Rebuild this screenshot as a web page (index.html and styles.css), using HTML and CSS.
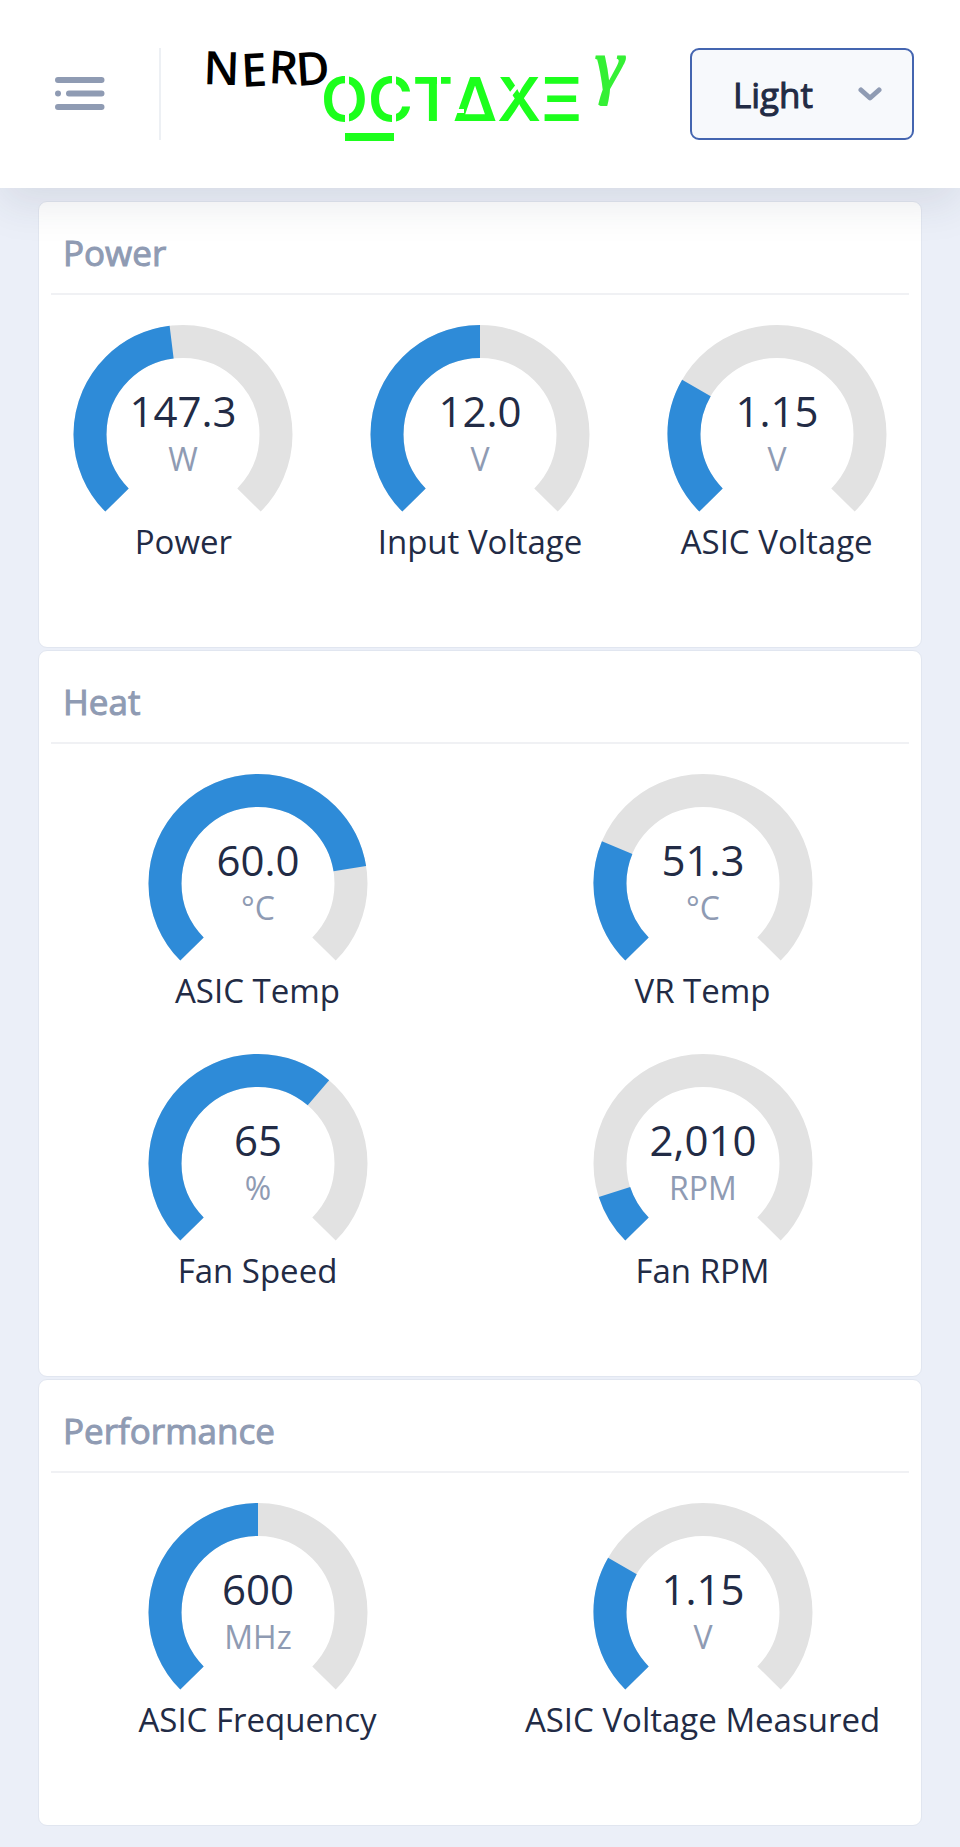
FILE: index.html
```html
<!DOCTYPE html>
<html lang="en">
<head>
  <meta charset="UTF-8" />
  <meta name="viewport" content="width=device-width, initial-scale=1.0"/>
  <title>NerdOctaxe γ</title>
  <link rel="stylesheet" href="styles.css">
</head>
<body>
  <header class="header">
    <button class="menu-button" type="button" aria-label="Toggle menu">
      <svg width="50" height="36" viewBox="0 0 50 36">
        <path d="M3 4H46.500M14 17.500H46.500M3 31H46.500M3 17.500H3.010"/>
      </svg>
    </button>
    <a class="logo" href="#" aria-label="NerdOctaxe γ">
      <svg width="430" height="92" viewBox="0 0 430 92">
        <text class="logo-nerd" x="3 42 68 97" y="36 39 35 38" rotate="2 -3 3 -4">NERD</text>
        <text class="logo-octaxe" x="121" y="73">OCTΔXΞ</text>
        <!-- stencil cuts -->
        <path class="logo-cut" d="M147 24V78M194 24V78M239 24V40M247 63H264M307 51L318 37"/>
        <rect class="logo-bar" x="145" y="85" width="49" height="8"/>
        <text class="logo-gamma" x="395" y="42">γ</text>
      </svg>
    </a>
    <div class="theme">
      <select class="theme-select" aria-label="Theme">
        <option>Light</option>
        <option>Dark</option>
      </select>
      <svg class="theme-arrow" width="24" height="16" viewBox="0 0 24 16">
        <path d="M3 4L12 12L21 4"/>
      </svg>
    </div>
  </header>

  <main class="container">
    <section class="card">
      <h2>Power</h2>
      <div class="gauges three">
        <figure class="gauge">
          <svg width="220" height="211" viewBox="0 0 220 211">
            <path class="track" d="M44 189A93 93 0 1 1 176 189"/>
            <path class="fill" d="M44 189A93 93 0 1 1 176 189" pathLength="100" stroke-dasharray="47.4 200"/>
            <text class="value" x="110" y="116">147.3</text>
            <text class="unit" x="110" y="160">W</text>
          </svg>
          <figcaption>Power</figcaption>
        </figure>
        <figure class="gauge">
          <svg width="220" height="211" viewBox="0 0 220 211">
            <path class="track" d="M44 189A93 93 0 1 1 176 189"/>
            <path class="fill" d="M44 189A93 93 0 1 1 176 189" pathLength="100" stroke-dasharray="50 200"/>
            <text class="value" x="110" y="116">12.0</text>
            <text class="unit" x="110" y="160">V</text>
          </svg>
          <figcaption>Input Voltage</figcaption>
        </figure>
        <figure class="gauge">
          <svg width="220" height="211" viewBox="0 0 220 211">
            <path class="track" d="M44 189A93 93 0 1 1 176 189"/>
            <path class="fill" d="M44 189A93 93 0 1 1 176 189" pathLength="100" stroke-dasharray="27.7 200"/>
            <text class="value" x="110" y="116">1.15</text>
            <text class="unit" x="110" y="160">V</text>
          </svg>
          <figcaption>ASIC Voltage</figcaption>
        </figure>
      </div>
    </section>

    <section class="card">
      <h2>Heat</h2>
      <div class="gauges">
        <figure class="gauge">
          <svg width="220" height="211" viewBox="0 0 220 211">
            <path class="track" d="M44 189A93 93 0 1 1 176 189"/>
            <path class="fill" d="M44 189A93 93 0 1 1 176 189" pathLength="100" stroke-dasharray="80 200"/>
            <text class="value" x="110" y="116">60.0</text>
            <text class="unit" x="110" y="160">°C</text>
          </svg>
          <figcaption>ASIC Temp</figcaption>
        </figure>
        <figure class="gauge">
          <svg width="220" height="211" viewBox="0 0 220 211">
            <path class="track" d="M44 189A93 93 0 1 1 176 189"/>
            <path class="fill" d="M44 189A93 93 0 1 1 176 189" pathLength="100" stroke-dasharray="25 200"/>
            <text class="value" x="110" y="116">51.3</text>
            <text class="unit" x="110" y="160">°C</text>
          </svg>
          <figcaption>VR Temp</figcaption>
        </figure>
        <figure class="gauge">
          <svg width="220" height="211" viewBox="0 0 220 211">
            <path class="track" d="M44 189A93 93 0 1 1 176 189"/>
            <path class="fill" d="M44 189A93 93 0 1 1 176 189" pathLength="100" stroke-dasharray="65 200"/>
            <text class="value" x="110" y="116">65</text>
            <text class="unit" x="110" y="160">%</text>
          </svg>
          <figcaption>Fan Speed</figcaption>
        </figure>
        <figure class="gauge">
          <svg width="220" height="211" viewBox="0 0 220 211">
            <path class="track" d="M44 189A93 93 0 1 1 176 189"/>
            <path class="fill" d="M44 189A93 93 0 1 1 176 189" pathLength="100" stroke-dasharray="10 200"/>
            <text class="value" x="110" y="116">2,010</text>
            <text class="unit" x="110" y="160">RPM</text>
          </svg>
          <figcaption>Fan RPM</figcaption>
        </figure>
      </div>
    </section>

    <section class="card">
      <h2>Performance</h2>
      <div class="gauges">
        <figure class="gauge">
          <svg width="220" height="211" viewBox="0 0 220 211">
            <path class="track" d="M44 189A93 93 0 1 1 176 189"/>
            <path class="fill" d="M44 189A93 93 0 1 1 176 189" pathLength="100" stroke-dasharray="50 200"/>
            <text class="value" x="110" y="116">600</text>
            <text class="unit" x="110" y="160">MHz</text>
          </svg>
          <figcaption>ASIC Frequency</figcaption>
        </figure>
        <figure class="gauge">
          <svg width="220" height="211" viewBox="0 0 220 211">
            <path class="track" d="M44 189A93 93 0 1 1 176 189"/>
            <path class="fill" d="M44 189A93 93 0 1 1 176 189" pathLength="100" stroke-dasharray="27.7 200"/>
            <text class="value" x="110" y="116">1.15</text>
            <text class="unit" x="110" y="160">V</text>
          </svg>
          <figcaption>ASIC Voltage Measured</figcaption>
        </figure>
      </div>
    </section>
  </main>
</body>
</html>
```
FILE: styles.css
```css
* {
  box-sizing: border-box;
}
body {
  font-family: "Open Sans", "Noto Sans", sans-serif;
  margin: 0;
  background: #ebeff8;
  color: #222b45;
}
.header {
  position: relative;
  z-index: 1;
  display: flex;
  align-items: center;
  padding: 48px 46px 48px 55px;
  background: #fff;
  box-shadow: 0 16px 40px rgba(44, 51, 73, 0.1);
}
.menu-button {
  display: flex;
  padding: 0;
  border: none;
  background: none;
  cursor: pointer;
}
.menu-button path,
.theme-arrow path {
  fill: none;
  stroke: #8f9bb3;
  stroke-width: 5;
  stroke-linecap: round;
  stroke-linejoin: round;
}
.menu-button path {
  stroke-width: 6;
}
.logo {
  display: flex;
  margin-left: 54px;
  padding-left: 39px;
  border-left: 2px solid #edf0f4;
}
.logo svg {
  overflow: visible;
}
.logo-nerd {
  font-size: 46px;
  font-weight: 600;
  fill: #000;
}
.logo-octaxe {
  font-family: Inter, sans-serif;
  font-size: 61px;
  font-weight: 600;
  fill: #1cff1c;
}
.logo-gamma {
  font-family: "Liberation Serif", serif;
  font-size: 72px;
  font-style: italic;
  fill: #35f035;
  stroke: #35f035;
  stroke-width: 2;
}
.logo-bar {
  fill: #1cff1c;
}
.logo-cut {
  fill: none;
  stroke: #fff;
  stroke-width: 4;
}
.theme {
  display: grid;
  align-items: center;
  width: 224px;
  margin-left: auto;
}
.theme-select,
.theme-arrow {
  grid-area: 1 / 1;
}
.theme-select {
  appearance: none;
  height: 92px;
  padding: 0 72px 0 41px;
  border: 2px solid #4465b0;
  border-radius: 9px;
  background: #f7f9fc;
  color: #222b45;
  font-family: inherit;
  font-size: 35px;
  -webkit-text-stroke: 1px #222b45;
}
.theme-arrow {
  justify-self: end;
  margin-right: 32px;
  pointer-events: none;
}
.container {
  display: flex;
  flex-direction: column;
  gap: 2px;
  padding: 13px 38px 21px;
}
.card {
  padding: 0 12px 56px;
  border: 1px solid #e1e6f0;
  border-radius: 9px;
  background: #fff;
}
.card h2 {
  margin: 0;
  padding: 27px 12px 16px;
  border-bottom: 2px solid #f0f1f4;
  color: #8f9bb3;
  font-size: 35px;
  font-weight: 400;
  line-height: 48px;
  -webkit-text-stroke: 1px #8f9bb3;
}
.gauges {
  display: grid;
  grid-template-columns: 1fr 1fr;
  margin: 16px -16px 0;
}
.gauges.three {
  grid-template-columns: 1fr 1fr 1fr;
}
.gauge {
  display: flex;
  flex-direction: column;
  align-items: center;
  margin: 0;
  padding-bottom: 29px;
}
.gauge figcaption {
  font-size: 33px;
  line-height: 40px;
  white-space: nowrap;
}
.track,
.fill {
  fill: none;
  stroke: #e2e2e2;
  stroke-width: 33;
}
.fill {
  stroke: #2e8bd8;
}
.value,
.unit {
  fill: #222b45;
  font-size: 42px;
  text-anchor: middle;
}
.unit {
  fill: #8f9bb3;
  font-size: 32px;
}
```
